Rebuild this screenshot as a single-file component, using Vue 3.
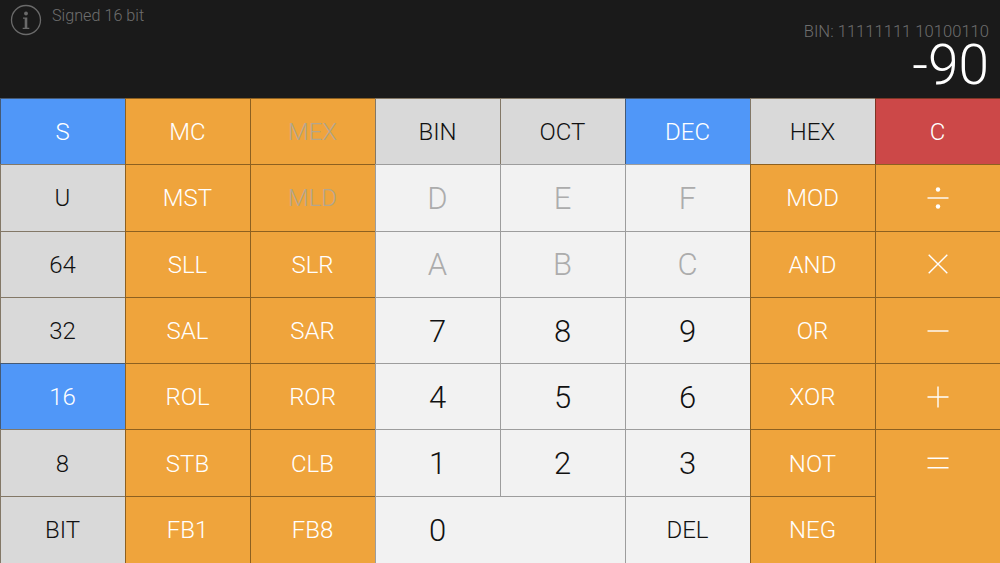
<script setup>
const keys = [
  { t: 'S', c: 'blue' }, { t: 'MC', c: 'orange' }, { t: 'MEX', c: 'orange dim' }, { t: 'BIN', c: 'gray' }, { t: 'OCT', c: 'gray' }, { t: 'DEC', c: 'blue' }, { t: 'HEX', c: 'gray' }, { t: 'C', c: 'red' },
  { t: 'U', c: 'gray' }, { t: 'MST', c: 'orange' }, { t: 'MLD', c: 'orange dim' }, { t: 'D', c: 'light off big' }, { t: 'E', c: 'light off big' }, { t: 'F', c: 'light off big' }, { t: 'MOD', c: 'orange' }, { i: 'div', c: 'orange' },
  { t: '64', c: 'gray' }, { t: 'SLL', c: 'orange' }, { t: 'SLR', c: 'orange' }, { t: 'A', c: 'light off big' }, { t: 'B', c: 'light off big' }, { t: 'C', c: 'light off big' }, { t: 'AND', c: 'orange' }, { i: 'mul', c: 'orange' },
  { t: '32', c: 'gray' }, { t: 'SAL', c: 'orange' }, { t: 'SAR', c: 'orange' }, { t: '7', c: 'light big' }, { t: '8', c: 'light big' }, { t: '9', c: 'light big' }, { t: 'OR', c: 'orange' }, { i: 'sub', c: 'orange' },
  { t: '16', c: 'blue' }, { t: 'ROL', c: 'orange' }, { t: 'ROR', c: 'orange' }, { t: '4', c: 'light big' }, { t: '5', c: 'light big' }, { t: '6', c: 'light big' }, { t: 'XOR', c: 'orange' }, { i: 'add', c: 'orange' },
  { t: '8', c: 'gray' }, { t: 'STB', c: 'orange' }, { t: 'CLB', c: 'orange' }, { t: '1', c: 'light big' }, { t: '2', c: 'light big' }, { t: '3', c: 'light big' }, { t: 'NOT', c: 'orange' }, { i: 'eq', c: 'orange tall' },
  { t: 'BIT', c: 'gray' }, { t: 'FB1', c: 'orange' }, { t: 'FB8', c: 'orange' }, { t: '0', c: 'light big wide' }, { t: 'DEL', c: 'light' }, { t: 'NEG', c: 'orange' },
]
</script>

<template>
  <div class="calc">
    <header class="display">
      <div class="status">
        <svg class="info" width="32" height="32" viewBox="0 0 32 32">
          <circle cx="16" cy="16" r="14.5" fill="none" stroke="#6a6a6a" stroke-width="1.3" />
          <circle cx="16" cy="9.5" r="1.9" fill="#6a6a6a" />
          <path d="M13 13.5h4.3v10.3h2V25h-6.6v-1.2h2v-9.1H13z" fill="#6a6a6a" />
        </svg>
        <span class="mode">Signed 16 bit</span>
      </div>
      <div class="readout">
        <div class="bin">BIN: 11111111 10100110</div>
        <div class="value">-90</div>
      </div>
    </header>
    <main class="pad">
      <button v-for="(k, n) in keys" :key="n" class="key" :class="k.c">
        <span v-if="k.t" class="label">{{ k.t }}</span>
        <svg v-else width="24" height="24" viewBox="0 0 24 24" stroke="#fff" stroke-width="1.4" fill="none">
          <template v-if="k.i === 'div'">
            <path d="M1.5 12h21" />
            <circle cx="12" cy="3.5" r="2.2" fill="#fff" stroke="none" />
            <circle cx="12" cy="20.5" r="2.2" fill="#fff" stroke="none" />
          </template>
          <path v-else-if="k.i === 'mul'" d="M2.7 2.7l18.6 18.6M21.3 2.7L2.7 21.3" />
          <path v-else-if="k.i === 'sub'" d="M1.5 12h21" />
          <path v-else-if="k.i === 'add'" d="M1.5 12h21M12 1.5v21" />
          <path v-else d="M1.5 7.3h21M1.5 16.7h21" />
        </svg>
      </button>
    </main>
  </div>
</template>

<style>
html, body { margin: 0; background: #1a1a1a; }
</style>

<style scoped>
.calc {
  width: 1000px;
  height: 563px;
  display: flex;
  flex-direction: column;
  overflow: hidden;
  font-family: Roboto, "Liberation Sans", sans-serif;
  font-weight: 300;
}
.display {
  height: 98px;
  flex: none;
  box-sizing: border-box;
  background: #1a1a1a;
  display: flex;
  justify-content: space-between;
  padding: 4px 11px 0 10px;
}
.status { display: flex; align-items: flex-start; gap: 10px; }
.mode { font-size: 16.2px; line-height: 24px; color: #6e6e6e; }
.readout { text-align: right; padding-top: 19px; }
.bin { font-size: 16.6px; line-height: 18px; color: #6e6e6e; }
.value { font-size: 55px; line-height: 49px; color: #fff; }
.pad {
  flex: 1;
  display: grid;
  grid-template-columns: repeat(8, 125px);
  grid-template-rows: repeat(6, 66.3px) 1fr;
}
.key {
  appearance: none;
  margin: 0;
  padding: 0 1px 0 0;
  border: 0;
  border-top: 1px solid rgba(60, 40, 10, 0.55);
  border-left: 1px solid rgba(60, 40, 10, 0.55);
  display: flex;
  align-items: center;
  justify-content: center;
  font: inherit;
  font-size: 24px;
  color: #111;
}
.label { padding-top: 1px; }
.blue { background: #5097f8; color: #fff; }
.orange { background: #efa43c; color: #fff; }
.red { background: #cc4848; color: #fff; }
.gray { background: #d9d9d9; }
.light { background: #f2f2f2; border-color: rgba(0, 0, 0, 0.35); }
.big { font-size: 31px; }
.off { color: #acacac; }
.dim { color: #b3a68d; }
.wide { grid-column: span 2; justify-content: flex-start; padding-left: 53px; }
.tall { grid-row: span 2; align-items: flex-start; padding-top: 21px; }
</style>
